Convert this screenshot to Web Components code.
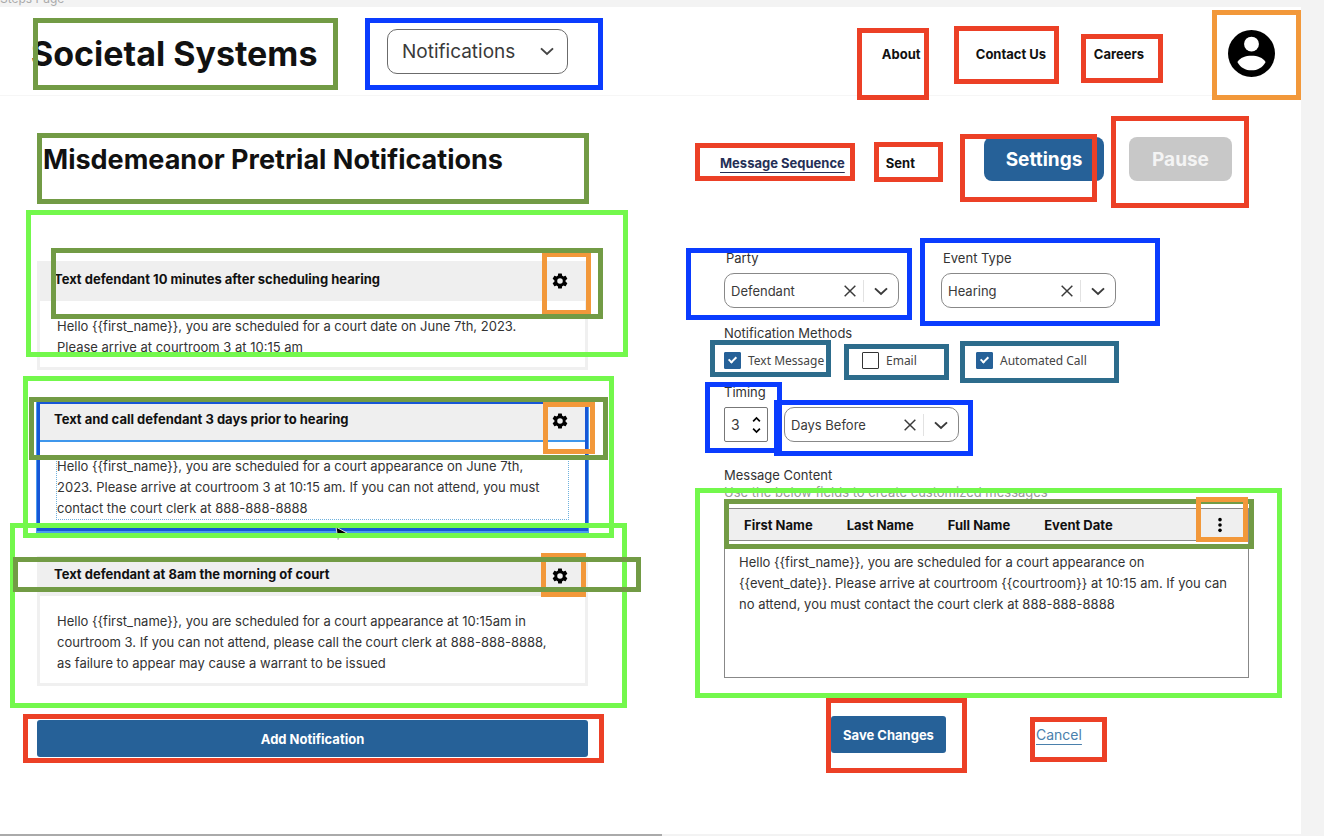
<!DOCTYPE html>
<html lang="en">
<head>
<meta charset="utf-8">
<meta name="viewport" content="width=device-width, initial-scale=1">
<title>Societal Systems</title>
<style>
  body { margin: 0; background: #f3f3f3; color: #1b1b1b; font-family: Inter, "Liberation Sans", sans-serif; font-size: 13px; }
</style>
</head>
<body>
<society-app></society-app>
<script>
const define = (name, html, setup) => {
  const template = document.createElement('template');
  template.innerHTML = '<style>*{box-sizing:border-box}[hidden]{display:none}button,select,input,textarea{font:inherit;color:inherit;margin:0}</style>' + html;
  customElements.define(name, class extends HTMLElement {
    constructor() {
      super();
      this.attachShadow({ mode: 'open' }).append(template.content.cloneNode(true));
    }
    connectedCallback() { if (setup) setup(this, this.shadowRoot); }
  });
};

/* ---------- icons ---------- */
const shapes = {
  chevron: '<path d="M4 8.500l8 7.500 8-7.500" fill="none" stroke="currentColor" stroke-width="2.600"/>',
  close: '<path d="M4 4l16 16M20 4L4 20" fill="none" stroke="currentColor" stroke-width="2.200"/>',
  gear: '<path fill="currentColor" fill-rule="evenodd" d="M19.430 12.980c.04-.32.07-.64.07-.98s-.03-.66-.07-.98l2.110-1.650c.19-.15.24-.42.12-.64l-2-3.460c-.12-.22-.39-.3-.61-.22l-2.490 1c-.52-.4-1.080-.73-1.690-.98l-.38-2.650A.488.488 0 0 0 14 2h-4c-.25 0-.46.18-.49.42l-.38 2.650c-.61.25-1.170.59-1.690.98l-2.490-1c-.23-.09-.49 0-.61.22l-2 3.460c-.13.22-.07.49.12.64l2.110 1.650c-.04.32-.07.65-.07.98s.03.66.07.98l-2.110 1.650c-.19.15-.24.42-.12.64l2 3.460c.12.22.39.3.61.22l2.490-1c.52.4 1.080.73 1.690.98l.38 2.650c.03.24.24.42.49.42h4c.25 0 .46-.18.49-.42l.38-2.650c.61-.25 1.170-.59 1.690-.98l2.490 1c.23.09.49 0 .61-.22l2-3.460c.12-.22.07-.49-.12-.64l-2.110-1.650zM12 15.700a3.700 3.700 0 1 1 0-7.400 3.700 3.700 0 0 1 0 7.400z"/>',
  person: '<circle cx="12" cy="12" r="12" fill="#000"/><circle cx="12" cy="7.200" r="3.800" fill="#fff"/><path d="M4.800 16.300C6.200 14.200 9 13.200 12 13.200s5.800 1 7.200 3.100C17.700 19.200 15 20.600 12 20.600s-5.700-1.400-7.200-4.300z" fill="#fff"/>',
  dots: '<circle cx="12" cy="4" r="2.700"/><circle cx="12" cy="12" r="2.700"/><circle cx="12" cy="20" r="2.700"/>',
  up: '<path d="M3 17l9-9 9 9" fill="none" stroke="currentColor" stroke-width="4.500"/>',
  down: '<path d="M3 7l9 9 9-9" fill="none" stroke="currentColor" stroke-width="4.500"/>'
};
define('ui-icon', `<style>:host{display:block;flex:none;width:16px;height:16px}svg{display:block;width:100%;height:100%}</style>
<svg viewBox="0 0 24 24" aria-hidden="true"></svg>`, (host, root) => {
  root.querySelector('svg').innerHTML = shapes[host.getAttribute('name')];
});

/* ---------- header ---------- */
define('site-header', `<style>
  :host{display:block;border-bottom:1px solid #f6f6f6}
  header{display:flex;align-items:center;height:88px;padding:4px 26px 0 31px}
  .brand{font-size:34px;font-weight:700;color:#111;width:356px;white-space:nowrap}
  .section{display:flex;align-items:center;position:relative;width:181px;height:45px;margin:0 auto 4px 0}
  select{appearance:none;width:100%;height:100%;border:1px solid #6b6b6b;border-radius:10px;background:none;padding:0 14px 0 14px;font-size:19px;color:#3a3a3a}
  .section ui-icon{position:absolute;right:12px;color:#444;pointer-events:none;width:18px;height:18px}
  nav{display:grid;grid-template-columns:94px 118px auto;margin-right:84px;padding-top:2px}
  a{color:#111;font-weight:700;font-size:13px;text-decoration:none;white-space:nowrap}
  button{border:0;background:none;padding:0;border-radius:50%}
  button ui-icon{width:47px;height:47px}
</style>
<header>
  <div class="brand">Societal Systems</div>
  <div class="section"><select aria-label="Section"><option>Notifications</option></select><ui-icon name="chevron"></ui-icon></div>
  <nav><a href="#about">About</a><a href="#contact">Contact Us</a><a href="#careers">Careers</a></nav>
  <button type="button" aria-label="Account"><ui-icon name="person"></ui-icon></button>
</header>`);

/* ---------- left column ---------- */
define('message-card', `<style>
  :host{display:block;position:relative;background:#fff;border:3px solid #f0f0f0;border-top:0}
  header{display:flex;align-items:center;justify-content:space-between;height:40px;padding:0 16px 4px 14px;background:#efefef}
  h2{margin:0;font-size:13px;font-weight:700;color:#111;white-space:nowrap}
  button{border:0;background:none;padding:4px 0 0}
  ui-icon{width:18px;height:18px;color:#000}
  .body{padding:15px 17px 9px;line-height:21px;font-size:13px;color:#333;white-space:nowrap}
  p{margin:0}
  :host([selected]){border:3px solid #1757d6;border-top:2px solid #1757d6;box-shadow:0 1px 0 1px #4a9cf0}
  :host([selected]) header{height:38px;padding-bottom:6px;border-bottom:2px solid #3f97ec}
  :host([selected]) .body{padding-top:14px}
  :host([selected]) p{outline:1px dotted #6fb2de}
</style>
<header><h2><slot name="title"></slot></h2><button type="button" aria-label="Notification settings"><ui-icon name="gear"></ui-icon></button></header>
<div class="body"><p><slot></slot></p></div>`);

define('notification-list', `<style>
  :host{display:block;min-width:0}
  h1{display:flex;align-items:center;height:44px;margin:0 0 80px;padding-left:6px;font-size:27px;font-weight:700;color:#111;white-space:nowrap}
  message-card{margin-bottom:25px}
  message-card:first-of-type{margin-bottom:32px}
  message-card:last-of-type{margin-bottom:34px}
  .add{display:block;width:100%;height:37px;border:0;border-radius:3px;background:#266198;color:#fff;font-weight:700;font-size:13px}
</style>
<h1>Misdemeanor Pretrial Notifications</h1>
<message-card><span slot="title">Text defendant 10 minutes after scheduling hearing</span>Hello {{first_name}}, you are scheduled for a court date on June 7th, 2023.<br>Please arrive at courtroom 3 at 10:15 am</message-card>
<message-card selected><span slot="title">Text and call defendant 3 days prior to hearing</span>Hello {{first_name}}, you are scheduled for a court appearance on June 7th,<br>2023. Please arrive at courtroom 3 at 10:15 am. If you can not attend, you must<br>contact the court clerk at 888-888-8888</message-card>
<message-card><span slot="title">Text defendant at 8am the morning of court</span>Hello {{first_name}}, you are scheduled for a court appearance at 10:15am in<br>courtroom 3. If you can not attend, please call the court clerk at 888-888-8888,<br>as failure to appear may cause a warrant to be issued</message-card>
<button class="add" type="button">Add Notification</button>`);

/* ---------- form controls ---------- */
define('pick-list', `<style>
  :host{display:block;width:175px}
  label{display:block;line-height:20px;margin-bottom:5px;padding-left:2px;color:#333}
  .box{display:flex;align-items:center;height:35px;border:1px solid #888;border-radius:10px;padding:0 8px 0 6px;color:#3a3a3a}
  select{appearance:none;flex:1;min-width:0;height:100%;border:0;background:none;padding:0;font-size:13px}
  button{border:0;background:none;padding:0}
  i{width:1px;height:22px;margin:0 8px 0 5px;background:#e2e2e2}
  .box>ui-icon{width:18px;height:18px}
</style>
<label for="s"></label>
<div class="box"><select id="s"><option></option></select><button type="button" aria-label="Clear"><ui-icon name="close"></ui-icon></button><i></i><ui-icon name="chevron"></ui-icon></div>`, (host, root) => {
  const label = root.querySelector('label');
  label.textContent = host.getAttribute('label') || '';
  label.hidden = !label.textContent;
  if (label.hidden) root.querySelector('select').setAttribute('aria-label', 'Timing unit');
  root.querySelector('option').textContent = host.getAttribute('value');
});

define('check-field', `<style>
  :host{display:block}
  label{display:flex;align-items:center;gap:7px;height:20px;font-family:"Noto Sans",sans-serif;font-size:12px;color:#444;white-space:nowrap}
  input{appearance:none;display:grid;place-items:center;flex:none;width:17px;height:17px;border:1px solid #333;border-radius:1px;background:#fff}
  input:checked{background:#266198;border-color:#266198}
  input:checked::before{content:"";width:3px;height:6px;margin-bottom:2px;border:solid #fff;border-width:0 2px 2px 0;transform:rotate(45deg)}
</style>
<label><input type="checkbox"><slot></slot></label>`, (host, root) => {
  root.querySelector('input').checked = host.hasAttribute('checked');
});

define('count-field', `<style>
  :host{display:block}
  label{display:block;line-height:20px;margin-bottom:5px;color:#333}
  .box{display:flex;align-items:center;width:44px;height:35px;border:1px solid #777;border-radius:2px;padding:0 6px}
  input{appearance:textfield;flex:1;min-width:0;border:0;padding:0;background:none;outline:0;font-size:14px;color:#3a3a3a}
  input::-webkit-inner-spin-button{display:none}
  .steps{display:grid;gap:2px}
  button{border:0;background:none;padding:0;color:#000}
  ui-icon{width:9px;height:9px}
</style>
<label for="n">Timing</label>
<div class="box"><input id="n" type="number" value="3"><div class="steps"><button type="button" aria-label="More"><ui-icon name="up"></ui-icon></button><button type="button" aria-label="Less"><ui-icon name="down"></ui-icon></button></div></div>`);

define('message-editor', `<style>
  :host{display:block}
  .caption{display:block;line-height:18px;color:#333}
  .hint{margin:0 0 8px;line-height:16px;color:#999}
  .frame{border:1px solid #888}
  .bar{display:flex;align-items:center;height:32px;padding:0 20px 0 19px;gap:34px;background:#efefef;border-bottom:1px solid #888}
  .bar button{border:0;background:none;padding:0;font-size:13px;font-weight:700;color:#111;white-space:nowrap}
  .bar .more{margin-left:auto}
  textarea{display:block;width:100%;height:136px;border:0;resize:none;background:#fff;padding:11px 14px;line-height:21px;font-size:13px;color:#333;white-space:pre;overflow:hidden}
</style>
<label class="caption" for="m">Message Content</label>
<p class="hint">Use the below fields to create customized messages</p>
<div class="frame">
  <div class="bar"><button type="button">First Name</button><button type="button">Last Name</button><button type="button">Full Name</button><button type="button">Event Date</button><button class="more" type="button" aria-label="More fields"><ui-icon name="dots"></ui-icon></button></div>
  <textarea id="m">Hello {{first_name}}, you are scheduled for a court appearance on
{{event_date}}. Please arrive at courtroom {{courtroom}} at 10:15 am. If you can
no attend, you must contact the court clerk at 888-888-8888</textarea>
</div>`);

define('settings-panel', `<style>
  :host{display:block;min-width:0}
  .tabs{display:flex;align-items:center;height:44px;margin-bottom:67px;white-space:nowrap}
  a{color:#111;font-size:13px;font-weight:700;text-decoration:none;padding-top:7px}
  .current{color:#252f56;text-decoration:underline;text-underline-offset:4px;margin-right:41px;margin-left:-4px}
  .tabs button{height:44px;border:0;border-radius:8px;color:#fff;font-size:19px;font-weight:700;padding:0}
  .settings{width:120px;background:#266198;margin-left:auto}
  .tabs .pause{width:103px;background:#c8c8c8;color:#f4f4f4;margin:0 17px 0 25px}
  .pair{display:flex;gap:42px;margin-bottom:15px}
  fieldset{border:0;margin:0 0 12px;padding:0}
  legend{padding:0;line-height:20px;margin-bottom:7px;color:#333}
  .checks{display:grid;grid-template-columns:138px 114px auto}
  .timing{display:flex;align-items:flex-end;gap:16px;margin-bottom:24px}
  .actions{display:flex;align-items:center;gap:90px;padding-left:107px;margin-top:38px}
  .save{width:115px;height:37px;border:0;border-radius:3px;background:#266198;color:#fff;font-weight:700;padding:0;font-size:13px;white-space:nowrap}
  .actions a{padding:0;font-weight:400;font-size:14px;color:#4a80ac;text-decoration:underline;text-underline-offset:4px}
</style>
<nav class="tabs"><a class="current" href="#sequence">Message Sequence</a><a href="#sent">Sent</a><button class="settings" type="button">Settings</button><button class="pause" type="button">Pause</button></nav>
<form>
  <div class="pair"><pick-list label="Party" value="Defendant"></pick-list><pick-list label="Event Type" value="Hearing"></pick-list></div>
  <fieldset><legend>Notification Methods</legend><div class="checks"><check-field checked>Text Message</check-field><check-field>Email</check-field><check-field checked>Automated Call</check-field></div></fieldset>
  <div class="timing"><count-field></count-field><pick-list value="Days Before"></pick-list></div>
  <message-editor></message-editor>
  <div class="actions"><button class="save" type="button">Save Changes</button><a href="#cancel">Cancel</a></div>
</form>`);

/* ---------- coloured markup drawn over the wireframe ---------- */
const colors = { olive: '#729b45', lime: '#73f84c', blue: '#0a3cff', red: '#ec4026', teal: '#2d6c8c', orange: '#f2983a' };
/* colour, left, top, right, bottom; later marks lie above earlier ones */
const marks = [
  ['orange', 542, 252, 591, 315], ['orange', 541, 553, 586, 597],
  ['lime', 26, 210, 628, 357], ['lime', 23, 376, 614, 538], ['lime', 10, 523, 627, 708], ['lime', 695, 488, 1282, 698],
  ['olive', 33, 18, 338, 90], ['olive', 37, 133, 589, 204], ['olive', 51, 248, 603, 319],
  ['olive', 29, 397, 608, 460], ['olive', 13, 557, 641, 592], ['olive', 724, 499, 1254, 549],
  ['blue', 365, 18, 603, 90], ['blue', 686, 248, 912, 320], ['blue', 920, 238, 1160, 326],
  ['blue', 705, 382, 782, 453], ['blue', 774, 400, 973, 456],
  ['red', 857, 28, 929, 100], ['red', 954, 26, 1059, 84], ['red', 1081, 34, 1163, 83],
  ['red', 695, 143, 855, 181], ['red', 874, 142, 943, 182], ['red', 960, 134, 1097, 202], ['red', 1111, 116, 1249, 208],
  ['red', 23, 714, 604, 763], ['red', 826, 698, 967, 773], ['red', 1030, 717, 1107, 762],
  ['teal', 710, 340, 831, 377], ['teal', 844, 344, 949, 380], ['teal', 960, 341, 1119, 383],
  ['orange', 1212, 10, 1301, 100], ['orange', 543, 402, 595, 454], ['orange', 1196, 497, 1248, 542]
];
define('markup-layer', `<style>
  :host{position:absolute;inset:0;pointer-events:none;overflow:hidden}
  .mark{position:absolute;border:5px solid}
  svg{position:absolute;left:334px;top:526px;width:14px;height:17px}
</style>
<svg viewBox="0 0 14 17" aria-hidden="true"><path d="M2 1l11 6-6 1-3 6z" fill="#000" stroke="#ddd"/></svg>`, (host, root) => {
  for (const [color, left, top, right, bottom] of marks) {
    const mark = document.createElement('div');
    mark.className = 'mark';
    mark.style.cssText = `left:${left}px;top:${top}px;width:${right - left}px;height:${bottom - top}px;border-color:${colors[color]}`;
    root.append(mark);
  }
});

/* ---------- page ---------- */
define('society-app', `<style>
  :host{display:flex;flex-direction:column;position:relative;min-height:100vh}
  .label{display:flex;align-items:flex-end;height:7px;overflow:hidden;font-size:12px;line-height:16px;color:#aaa}
  .sheet{flex:1;margin-right:23px;background:#fff}
  main{display:grid;grid-template-columns:551fr 525fr;gap:136px;padding:41px 52px 0 37px}
  .scroll{width:50%;height:2px;background:#aaa}
</style>
<div class="label">Steps Page</div>
<div class="sheet"><site-header></site-header><main><notification-list></notification-list><settings-panel></settings-panel></main></div>
<div class="scroll"></div>
<markup-layer></markup-layer>`);
</script>
</body>
</html>
